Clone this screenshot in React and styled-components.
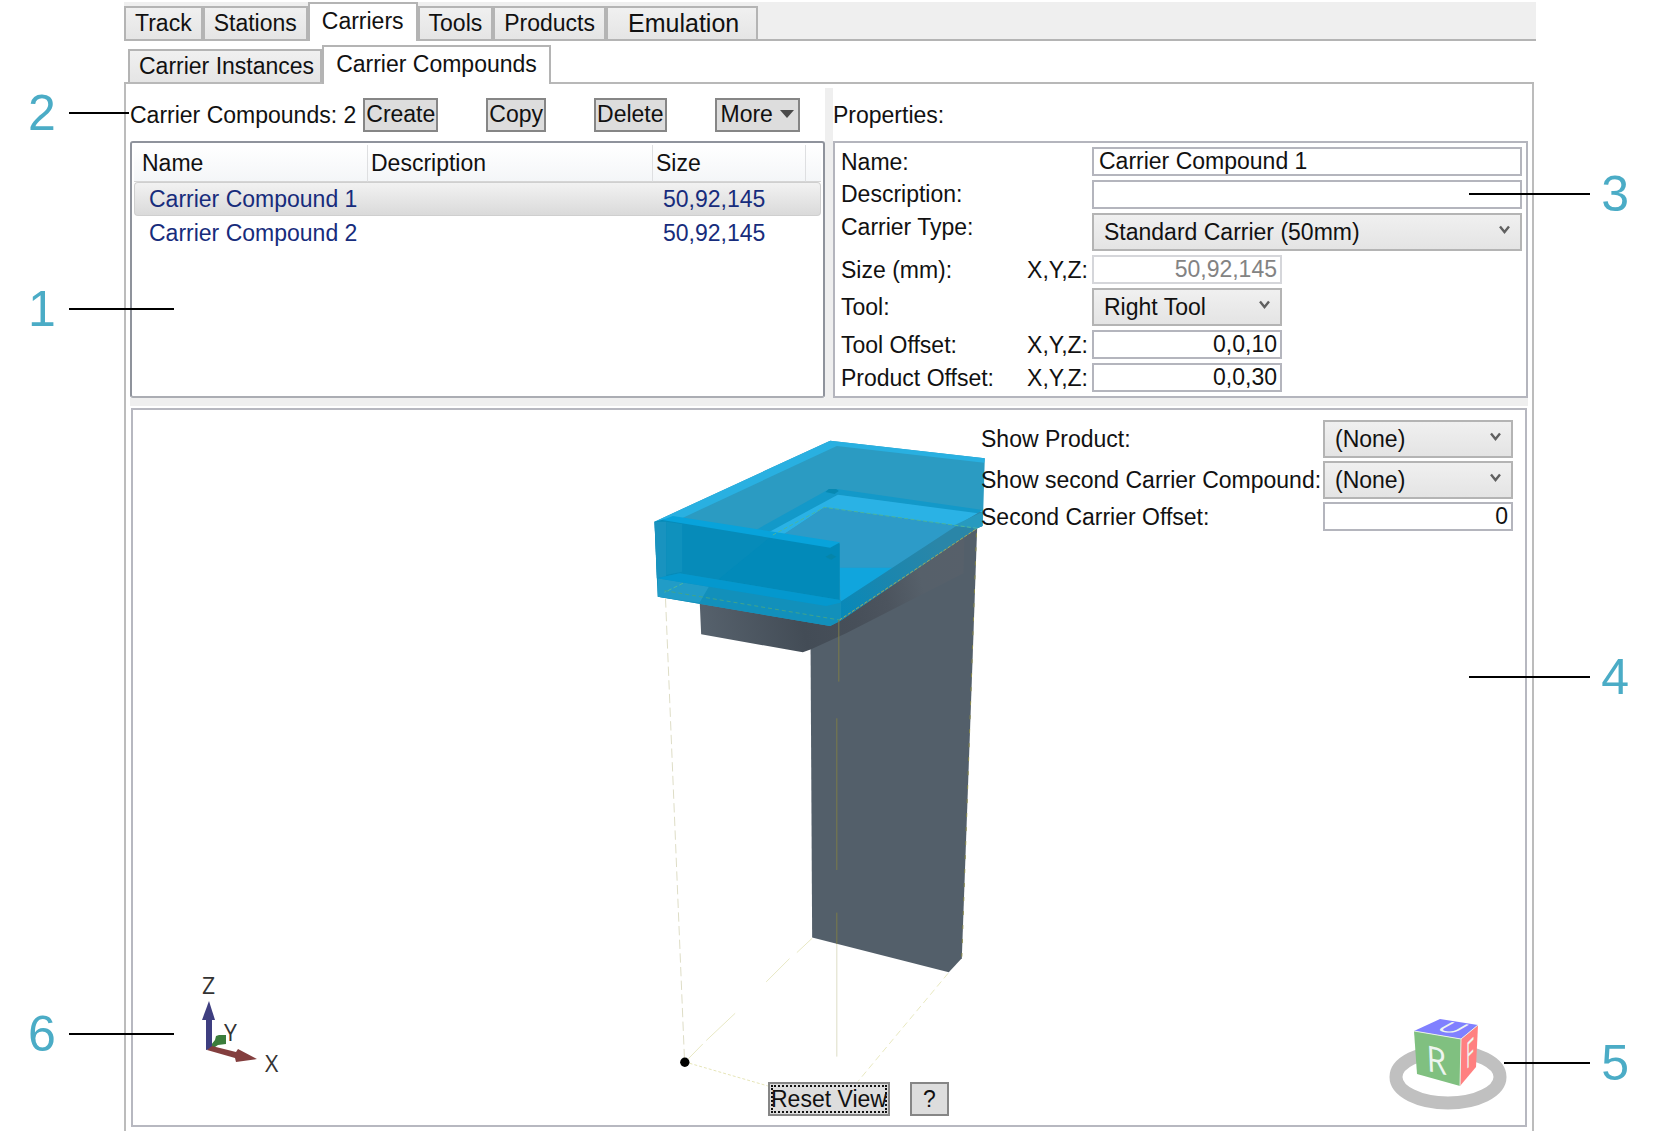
import styled, { createGlobalStyle, css } from "styled-components";

const GlobalStyle = createGlobalStyle`
  * {
    box-sizing: border-box;
  }

  body {
    margin: 0;
    background-color: #fff;
    color: #111;
    font-family: "Liberation Sans", Arial, sans-serif;
    font-size: 23px;
    line-height: 28px;
  }

  button,
  input,
  select {
    font: inherit;
    color: inherit;
    margin: 0;
  }
`;

const mainTabs = [
  { label: "Track" },
  { label: "Stations" },
  { label: "Carriers", active: true },
  { label: "Tools" },
  { label: "Products" },
  { label: "Emulation", wide: true },
];

const subTabs = [
  { label: "Carrier Instances" },
  { label: "Carrier Compounds", active: true },
];

const compounds = [
  { id: 1, name: "Carrier Compound 1", description: "", size: "50,92,145" },
  { id: 2, name: "Carrier Compound 2", description: "", size: "50,92,145" },
];

const callouts = [
  { number: 2, side: "left", top: 86, line: 60 },
  { number: 1, side: "left", top: 282, line: 105 },
  { number: 6, side: "left", top: 1007, line: 105 },
  { number: 3, side: "right", top: 167, line: 121 },
  { number: 4, side: "right", top: 650, line: 121 },
  { number: 5, side: "right", top: 1036, line: 86 },
];

const Page = styled.div`
  position: relative;
  display: flex;
  flex-direction: column;
  min-height: 100vh;
  padding: 2px 122px 2px 124px;
`;

const TabStrip = styled.div`
  display: flex;
  align-items: flex-end;
  height: 39px;
  background-color: #efefef;
  border-bottom: 2px solid #b4b4b4;
`;

const Tab = styled.button`
  height: 33px;
  padding: 0 9px 2px;
  border: 2px solid #b4b4b4;
  border-bottom: 0;
  background: linear-gradient(#f0f0f0, #e5e5e5);
  white-space: nowrap;

  ${({ $wide }) =>
    $wide &&
    css`
      padding: 0 17px 2px 20px;
      font-size: 25px;
    `}

  ${({ $active }) =>
    $active &&
    css`
      height: 39px;
      margin-bottom: -2px;
      padding: 0 12px 4px;
      background: #fff;
    `}
`;

const SubTabStrip = styled(TabStrip)`
  height: 43px;
  margin-right: 2px;
  padding-left: 4px;
  background-color: #fff;
  border-bottom-color: #b8b8b8;

  & > ${Tab}:first-child {
    padding: 0 6px 2px 9px;
  }
`;

const Pane = styled.main`
  flex: 1;
  display: flex;
  flex-direction: column;
  margin-right: 2px;
  padding: 4px;
  border: 2px solid #bcbcbc;
  border-width: 0 2px;
`;

const Split = styled.div`
  display: grid;
  grid-template-columns: 1fr 8px 1fr;
`;

const Splitter = styled.div`
  background-color: #efefef;
`;

const BottomSplitter = styled(Splitter)`
  height: 8px;
`;

const Column = styled.section`
  display: flex;
  flex-direction: column;
  min-width: 0;
`;

const Toolbar = styled.div`
  display: flex;
  align-items: center;
  gap: 48px;
  height: 53px;
  white-space: nowrap;
`;

const ToolbarStart = styled.div`
  display: flex;
  align-items: center;
  gap: 7px;
`;

const Button = styled.button`
  display: flex;
  align-items: center;
  gap: 7px;
  height: 34px;
  padding: 0 ${({ $pad = 1 }) => $pad}px 1px;
  border: 2px solid #868686;
  background-color: #ddd;
  white-space: nowrap;
`;

const ResetButton = styled(Button)`
  outline: 2px dotted #111;
  outline-offset: -5px;
`;

const ListBox = styled.div`
  height: 257px;
  padding: 2px;
  border: 2px solid #8f939c;
  border-bottom-color: #abadb3;
  border-radius: 3px;
`;

const Table = styled.table`
  width: 100%;
  table-layout: fixed;
  border-collapse: separate;
  border-spacing: 0;
  text-align: left;
`;

const Th = styled.th`
  height: 37px;
  padding: 0 0 0 3px;
  border-right: 1px solid #dedfe1;
  border-bottom: 1px solid #d5d5d5;
  background: linear-gradient(#fff, #f4f6f8);
  font-weight: normal;

  &:first-child {
    padding-left: 8px;
  }

  &:last-child {
    border-right: 0;
  }
`;

const Td = styled.td`
  height: 34px;
  padding: 0 0 0 10px;
  border: 0 solid transparent;
  border-width: 1px 0;
  color: #172c7c;

  &:first-child {
    padding-left: 14px;
    border-left-width: 1px;
    border-radius: 4px 0 0 4px;
  }

  &:last-child {
    border-right-width: 1px;
    border-radius: 0 4px 4px 0;
  }

  ${({ $selected }) =>
    $selected &&
    css`
      border-color: #cfcfcf;
      background: linear-gradient(#f2f2f2, #dadada);
    `}
`;

const Properties = styled.form`
  display: grid;
  grid-template-columns: 183px 70px 190px 1fr;
  row-gap: 4px;
  align-content: start;
  height: 257px;
  padding: 4px;
  border: 2px solid #b4b5bd;
`;

const Label = styled.label`
  grid-column: 1;
  align-self: ${({ $top }) => ($top ? "start" : "center")};
  padding-left: 2px;
`;

const Axes = styled.span`
  grid-column: 2;
  align-self: center;
  padding-right: 4px;
  text-align: right;
`;

const Input = styled.input`
  grid-column: ${({ $wide }) => ($wide ? "3 / 5" : "3")};
  width: 100%;
  height: 29px;
  padding: 0 3px 0 5px;
  border: 2px solid #b4b5bd;
  border-radius: 0;
  background-color: #fff;
  text-align: ${({ $right }) => ($right ? "right" : "left")};

  &:disabled {
    border-color: #d5d6da;
    color: #838383;
  }
`;

const SelectWrap = styled.div`
  position: relative;
  grid-column: ${({ $wide }) => ($wide ? "3 / 5" : "3")};
  height: 38px;

  & > svg {
    position: absolute;
    top: 12px;
    right: 12px;
    pointer-events: none;
  }
`;

const StyledSelect = styled.select`
  appearance: none;
  width: 100%;
  height: 100%;
  padding: 0 28px 1px 10px;
  border: 2px solid #b4b4b4;
  border-radius: 0;
  background: linear-gradient(#f0f0f0, #e4e4e4);
`;

const Viewport = styled.section`
  position: relative;
  flex: 1;
  min-height: 620px;
  margin: 2px 1px 0;
  border: 2px solid #b7b8c0;
`;

const Scene = styled.svg`
  position: absolute;
  inset: 0;
  width: 100%;
  height: 100%;
`;

const ViewOptions = styled.form`
  position: absolute;
  top: 10px;
  right: 12px;
  display: grid;
  grid-template-columns: 342px 190px;
  row-gap: 3px;
  align-items: center;

  & > ${SelectWrap}, & > ${Input} {
    grid-column: 2;
  }
`;

const ViewLabel = styled.label`
  grid-column: 1;
  white-space: nowrap;
`;

const ViewActions = styled.div`
  position: absolute;
  bottom: 9px;
  left: 50%;
  display: flex;
  gap: 20px;
  margin-left: -61px;
`;

const AxisCross = styled.svg`
  position: absolute;
  left: 60px;
  bottom: 45px;
`;

const ViewCube = styled.svg`
  position: absolute;
  right: 16px;
  bottom: 12px;
`;

const CalloutBox = styled.div`
  position: absolute;
  top: ${({ $top }) => $top - 1}px;
  ${({ $side }) => ($side === "left" ? "left: 28px;" : "right: 29px;")}
  display: flex;
  flex-direction: ${({ $side }) => ($side === "left" ? "row" : "row-reverse")};
  align-items: center;
  gap: ${({ $side }) => ($side === "left" ? 13 : 11)}px;
  color: #4bacc6;
  font-size: 50px;
  line-height: 56px;
  pointer-events: none;
`;

const CalloutLine = styled.span`
  width: ${({ $length }) => $length}px;
  height: 2px;
  background-color: #000;
`;

const Select = ({ id, value, wide }) => (
  <SelectWrap $wide={wide}>
    <StyledSelect id={id} defaultValue={value}>
      <option>{value}</option>
    </StyledSelect>
    <svg width="11" height="11" viewBox="0 0 11 11" aria-hidden="true">
      <path d="M1 1.5 5.5 7 10 1.5" fill="none" stroke="#606060" strokeWidth="2.4" />
    </svg>
  </SelectWrap>
);

const CarrierModel = () => (
  <Scene viewBox="134 410 1391 715" aria-hidden="true">
    <defs>
      <linearGradient id="arm" gradientUnits="userSpaceOnUse" x1="180" y1="560" x2="980" y2="400">
        <stop offset="0" stopColor="#56616c" />
        <stop offset="0.36" stopColor="#434c56" />
        <stop offset="0.55" stopColor="#474f59" />
        <stop offset="0.68" stopColor="#4c545e" />
        <stop offset="0.82" stopColor="#56606a" />
        <stop offset="1" stopColor="#57606a" />
      </linearGradient>
      <linearGradient id="side" gradientUnits="userSpaceOnUse" x1="600" y1="580" x2="900" y2="380">
        <stop offset="0" stopColor="#0789b9" />
        <stop offset="0.5" stopColor="#1b86ae" />
        <stop offset="1" stopColor="#2a86a8" />
      </linearGradient>
    </defs>
    <g transform="translate(640 420) scale(0.3333)">
      {/* carrier body */}
      <path d="M513 640 1013 325 1000 700 967 1615 928 1657 518 1553Z" fill="#535f6a" />
      <path d="M180 530 600 560 975 340 972 460 620 640 515 688 490 697 185 643Z" fill="url(#arm)" />
      {/* tool tray */}
      <path d="M45 305 572 62 1036 115 1030 318 1013 325 603 602 572 618 55 530Z" fill="#2b9bc2" />
      <path d="M45 305 572 62 1036 115 1034 128 592 78 105 305Z" fill="#29b0e1" />
      <path d="M340 335 568 208 597 208 1030 270 1016 282 595 224 400 340Z" fill="#1399c9" />
      <path d="M558 216 568 207H590L598 213 585 222Z" fill="#0789b2" />
      <path d="M385 338 595 224 1016 280 1028 270 1028 318 1013 325 555 262 430 345Z" fill="#2ab2e5" />
      <path d="M430 345 555 262 950 318 825 443 600 443V368Z" fill="#2d9bc8" />
      <path d="M600 443H830L603 545Z" fill="#10a5dd" />
      <path d="M1020 276 950 318 603 545V602L1013 325 1028 318V276Z" fill="url(#side)" />
      <path d="M1020 280 1028 276V318L1013 325 940 318Z" fill="#279abf" />
      <path d="M45 305 75 298 600 368V545L572 556 52 475Z" fill="#068bb9" />
      <path d="M45 305H80V470L52 475Z" fill="#1993bf" />
      <path d="M80 305 128 312V455L80 465Z" fill="#0f91bd" />
      <path d="M210 500 400 345 600 372V540Z" fill="#028ab9" />
      <path d="M52 475 120 460 603 540V602L572 618 55 530Z" fill="#1290bb" />
      <path d="M55 475 208 500 180 548 55 530Z" fill="#219cc7" />
      <path d="M52 475 120 460 603 540 603 548 560 558Z" fill="#0498ce" />
      <path d="M68 300 100 288 602 367 572 383Z" fill="#08a3db" />
      <path d="M558 410 575 401 590 410 575 419Z" fill="#0585a9" />
      {/* bounding box */}
      <g fill="none" strokeWidth="3">
        <path d="M75 512 600 600" stroke="#3fa48d" strokeDasharray="12 9" />
        <path d="M600 600 1013 325" stroke="#a5a855" strokeDasharray="10 5" />
        <path d="M1013 325 555 262 400 345M130 490 75 517" stroke="#4bb59d" strokeDasharray="12 7" />
        <path d="M598 600V785M592 895V1350M592 1478V1572" stroke="#7b7b4a" />
        <path d="M592 1572V1910" stroke="#deddc6" />
        <path d="M78 535 135 1920" stroke="#deddc6" strokeDasharray="28 13" />
        <path d="M1011 340 967 1610" stroke="#8c8c4c" strokeDasharray="12 30" />
        <path d="M518 1555 472 1598M450 1616 380 1686M287 1780 200 1862M190 1872 145 1918" stroke="#e8e8c4" />
        <path d="M150 1930 385 1998" stroke="#e6e5b8" strokeDasharray="9 6" />
        <path d="M926 1660 655 1985" stroke="#e8e8c0" strokeDasharray="20 12" />
      </g>
      <circle cx="136" cy="1927" r="14" fill="#000" />
    </g>
  </Scene>
);

const AxisIndicator = () => (
  <AxisCross width="100" height="110" viewBox="194 970 100 110" role="img" aria-label="Axes">
    <path d="M212 1045 216 1040 217 1036 220 1035 227 1035 227 1044 219 1045 213 1049Z" fill="#3b7d3b" />
    <path d="M207 1019H213V1049L207 1050Z" fill="#3e3e80" />
    <path d="M210 1001 216 1020H203Z" fill="#3e3e80" />
    <path d="M208 1050 213 1046 237 1052 239 1049 258 1059 237 1062 236 1058Z" fill="#833e3e" />
    <g fill="#333" fontFamily="Open Sans, sans-serif" fontSize="23">
      <text x="203" y="994">Z</text>
      <text x="225" y="1041">Y</text>
      <text x="266" y="1072">X</text>
    </g>
  </AxisCross>
);

const OrientationCube = () => (
  <ViewCube width="122" height="96" viewBox="1387 1017 122 96" role="img" aria-label="View cube">
    <ellipse cx="1448" cy="1077" rx="52" ry="26" fill="none" stroke="#c0c0c0" strokeWidth="13" />
    <path d="M1414 1031 1440 1019 1478 1025 1461 1039Z" fill="#8080ff" />
    <path d="M1414 1031 1461 1039 1460 1086 1417 1074Z" fill="#80c080" />
    <path d="M1461 1039 1478 1025 1476 1067 1460 1086Z" fill="#ff8080" />
    <path d="M1414 1031 1461 1039 1478 1025M1461 1039 1460 1086" fill="none" stroke="#e8f0e8" />
    <g fill="#eef5f0" fontFamily="Open Sans, sans-serif" fontSize="36" textAnchor="middle">
      {/* each letter lies in the plane of its face */}
      <text transform="matrix(0.9 0.2 0.04 1 1437 1073)">R</text>
      <text transform="matrix(0.42 -0.42 0 1 1470 1066)">F</text>
      <text transform="matrix(0.85 0.14 -0.6 0.34 1445 1032)">U</text>
    </g>
  </ViewCube>
);

const App = () => {
  return (
    <>
      <GlobalStyle />
      <Page>
        <TabStrip role="tablist">
          {mainTabs.map((tab) => (
            <Tab
              key={tab.label}
              type="button"
              role="tab"
              aria-selected={!!tab.active}
              $active={tab.active}
              $wide={tab.wide}
            >
              {tab.label}
            </Tab>
          ))}
        </TabStrip>
        <SubTabStrip role="tablist">
          {subTabs.map((tab) => (
            <Tab
              key={tab.label}
              type="button"
              role="tab"
              aria-selected={!!tab.active}
              $active={tab.active}
            >
              {tab.label}
            </Tab>
          ))}
        </SubTabStrip>
        <Pane>
          <Split>
            <Column>
              <Toolbar>
                <ToolbarStart>
                  <span>Carrier Compounds: 2</span>
                  <Button type="button">Create</Button>
                </ToolbarStart>
                <Button type="button">Copy</Button>
                <Button type="button">Delete</Button>
                <Button type="button" $pad={4}>
                  More
                  <svg width="14" height="8" viewBox="0 0 14 8" aria-hidden="true">
                    <path d="M0 0H14L7 8Z" fill="#4a4a4a" />
                  </svg>
                </Button>
              </Toolbar>
              <ListBox>
                <Table>
                  <colgroup>
                    <col style={{ width: 234 }} />
                    <col style={{ width: 285 }} />
                    <col style={{ width: 153 }} />
                    <col />
                  </colgroup>
                  <thead>
                    <tr>
                      <Th>Name</Th>
                      <Th>Description</Th>
                      <Th>Size</Th>
                      <Th aria-hidden="true" />
                    </tr>
                  </thead>
                  <tbody>
                    {compounds.map((item) => (
                      <tr key={item.id}>
                        <Td $selected={item.id === 1}>{item.name}</Td>
                        <Td $selected={item.id === 1}>{item.description}</Td>
                        <Td $selected={item.id === 1}>{item.size}</Td>
                        <Td $selected={item.id === 1} />
                      </tr>
                    ))}
                  </tbody>
                </Table>
              </ListBox>
            </Column>
            <Splitter />
            <Column>
              <Toolbar>Properties:</Toolbar>
              <Properties>
                <Label htmlFor="name">Name:</Label>
                <Input id="name" defaultValue="Carrier Compound 1" $wide />
                <Label htmlFor="description" $top>
                  Description:
                </Label>
                <Input id="description" $wide />
                <Label htmlFor="type" $top>
                  Carrier Type:
                </Label>
                <Select id="type" value="Standard Carrier (50mm)" wide />
                <Label htmlFor="size">Size (mm):</Label>
                <Axes>X,Y,Z:</Axes>
                <Input id="size" defaultValue="50,92,145" $right disabled />
                <Label htmlFor="tool">Tool:</Label>
                <Select id="tool" value="Right Tool" />
                <Label htmlFor="toolOffset">Tool Offset:</Label>
                <Axes>X,Y,Z:</Axes>
                <Input id="toolOffset" defaultValue="0,0,10" $right />
                <Label htmlFor="productOffset">Product Offset:</Label>
                <Axes>X,Y,Z:</Axes>
                <Input id="productOffset" defaultValue="0,0,30" $right />
              </Properties>
            </Column>
          </Split>
          <BottomSplitter />
          <Viewport>
            <CarrierModel />
            <AxisIndicator />
            <OrientationCube />
            <ViewOptions>
              <ViewLabel htmlFor="product">Show Product:</ViewLabel>
              <Select id="product" value="(None)" />
              <ViewLabel htmlFor="second">Show second Carrier Compound:</ViewLabel>
              <Select id="second" value="(None)" />
              <ViewLabel htmlFor="secondOffset">Second Carrier Offset:</ViewLabel>
              <Input id="secondOffset" defaultValue="0" $right />
            </ViewOptions>
            <ViewActions>
              <ResetButton type="button">Reset View</ResetButton>
              <Button type="button" $pad={11}>
                ?
              </Button>
            </ViewActions>
          </Viewport>
        </Pane>
        {callouts.map(({ number, side, top, line }) => (
          <CalloutBox key={number} $side={side} $top={top}>
            {number}
            <CalloutLine $length={line} />
          </CalloutBox>
        ))}
      </Page>
    </>
  );
};

export default App;
